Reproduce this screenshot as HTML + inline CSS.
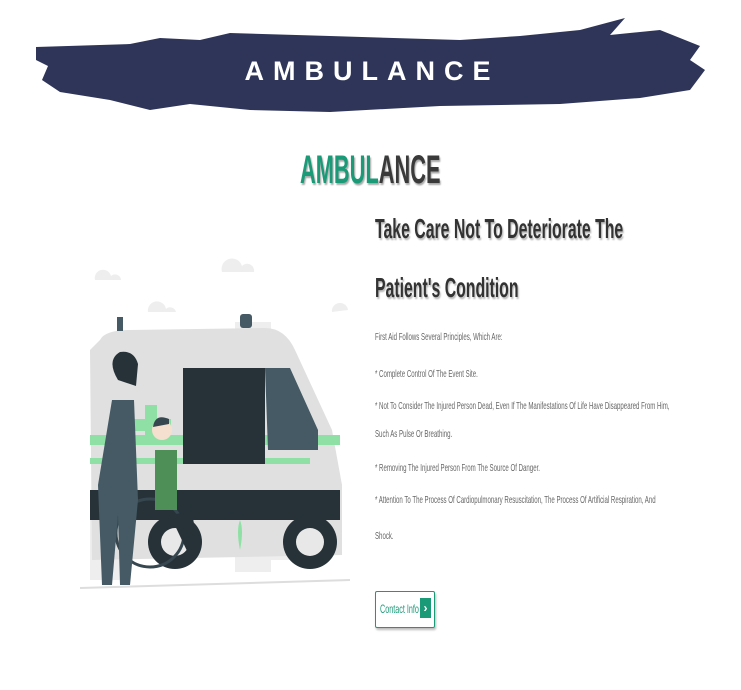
<!DOCTYPE html>
<html><head><meta charset="utf-8"><style>
body{margin:0;width:741px;height:690px;background:#fff;position:relative;overflow:hidden;font-family:"Liberation Sans",sans-serif}
.a{position:absolute;white-space:nowrap;transform-origin:0 0}
.p{font-size:10.5px;color:#666;transform:scaleX(.58)}
</style></head><body>
<svg class="a" style="left:0;top:0" width="741" height="140">
<path d="M36 47 L130 44 L160 38 L200 40 L230 33 L330 36 L460 40 L520 36 L580 30 L625 18 L610 35 L660 30 L700 46 L690 60 L705 70 L690 90 L640 98 L560 104 L440 106 L330 112 L250 110 L190 104 L150 110 L110 100 L60 92 L42 80 L48 66 L36 60 Z" fill="#2e3558"/>
<text x="372" y="80" fill="#fff" font-family="Liberation Sans" font-weight="bold" font-size="27" letter-spacing="9" text-anchor="middle">AMBULANCE</text>
</svg>
<div class="a" style="left:300px;top:148px;font-size:40px;font-weight:bold;transform:scaleX(.545);text-shadow:2px 2px 2px #aaa;color:#3a3a3a"><span style="color:#1b9a78">AMBUL</span>ANCE</div>
<div class="a" style="left:375px;top:213px;font-size:28px;font-weight:bold;color:#333;transform:scaleX(.565);text-shadow:2px 2px 2px #bbb">Take Care Not To Deteriorate The</div>
<div class="a" style="left:375px;top:272px;font-size:28px;font-weight:bold;color:#333;transform:scaleX(.565);text-shadow:2px 2px 2px #bbb">Patient's Condition</div>
<div class="a p" style="left:375px;top:331px">First Aid Follows Several Principles, Which Are:</div>
<div class="a p" style="left:375px;top:368px">* Complete Control Of The Event Site.</div>
<div class="a p" style="left:375px;top:400px">* Not To Consider The Injured Person Dead, Even If The Manifestations Of Life Have Disappeared From Him,</div>
<div class="a p" style="left:375px;top:428px">Such As Pulse Or Breathing.</div>
<div class="a p" style="left:375px;top:462px">* Removing The Injured Person From The Source Of Danger.</div>
<div class="a p" style="left:375px;top:494px">* Attention To The Process Of Cardiopulmonary Resuscitation, The Process Of Artificial Respiration, And</div>
<div class="a p" style="left:375px;top:530px">Shock.</div>
<div class="a" style="left:375px;top:591px;width:58px;height:35px;border:1.5px solid #1b9a78;border-radius:2px;box-shadow:1px 2px 2px #bbb"></div>
<div class="a" style="left:380px;top:602px;font-size:12px;color:#1b9a78;transform:scaleX(.6)">Contact Info</div>
<div class="a" style="left:420px;top:598px;width:11px;height:20px;background:#1b9a78;color:#fff;font-size:12px;font-weight:bold;text-align:center;line-height:20px">›</div>
<svg class="a" style="left:70px;top:250px" width="300" height="350">
<g fill="#eee"><path d="M25 30 a8 8 0 0 1 16 -4 a6 6 0 0 1 10 4 Z"/><path d="M152 22 a10 10 0 0 1 20 -6 a7 7 0 0 1 12 6 Z"/><path d="M78 62 a9 9 0 0 1 18 -3 a6 6 0 0 1 10 3 Z"/><path d="M262 62 a8 8 0 0 1 16 -2 Z"/>
<rect x="165" y="72" width="36" height="250"/><rect x="200" y="110" width="25" height="200"/><rect x="20" y="240" width="30" height="90"/></g>
<path d="M30 90 Q35 80 60 80 L195 78 Q215 78 225 100 L262 180 L272 235 L272 305 L22 310 L20 100 Z" fill="#e0e0e0"/>
<rect x="47" y="67" width="6" height="14" fill="#455a64"/><rect x="170" y="64" width="12" height="14" rx="3" fill="#455a64"/>
<rect x="20" y="185" width="250" height="10" fill="#8fe0a4"/><rect x="20" y="208" width="220" height="6" fill="#8fe0a4"/>
<path d="M75 155 l12 0 0 14 14 0 0 12 -14 0 0 14 -12 0 0 -14 -14 0 0 -12 14 0Z" fill="#8fe0a4"/>
<rect x="113" y="118" width="82" height="96" fill="#263238"/>
<path d="M195 118 L220 118 L248 180 L248 200 L198 200 Z" fill="#455a64"/>
<rect x="20" y="240" width="250" height="30" fill="#263238"/>
<circle cx="240" cy="292" r="27" fill="#263238"/><circle cx="240" cy="292" r="14" fill="#e8e8e8"/>
<circle cx="105" cy="292" r="27" fill="#263238"/><circle cx="105" cy="292" r="14" fill="#e8e8e8"/>
<circle cx="80" cy="283" r="34" fill="none" stroke="#37474f" stroke-width="3"/>
<path d="M48 130 q-12 -20 2 -28 q14 -2 18 12 l-2 22Z" fill="#263238"/>
<path d="M42 150 l22 0 4 100 -8 85 -10 0 -2 -70 -6 70 -10 0 -4 -100Z" fill="#455a64"/>
<rect x="85" y="200" width="22" height="60" fill="#4d8f56"/>
<circle cx="92" cy="180" r="10" fill="#f5e0d0"/><path d="M83 177 q2 -14 16 -8 l0 5Z" fill="#37474f"/>
<path d="M100 265 l22 -4 6 40 -10 2Z" fill="#263238"/>
<path d="M170 300 q-4 -20 0 -30 q4 10 0 30" fill="#8fe0a4"/>
<line x1="10" y1="338" x2="280" y2="330" stroke="#ddd" stroke-width="2"/>
</svg>
</body></html>
